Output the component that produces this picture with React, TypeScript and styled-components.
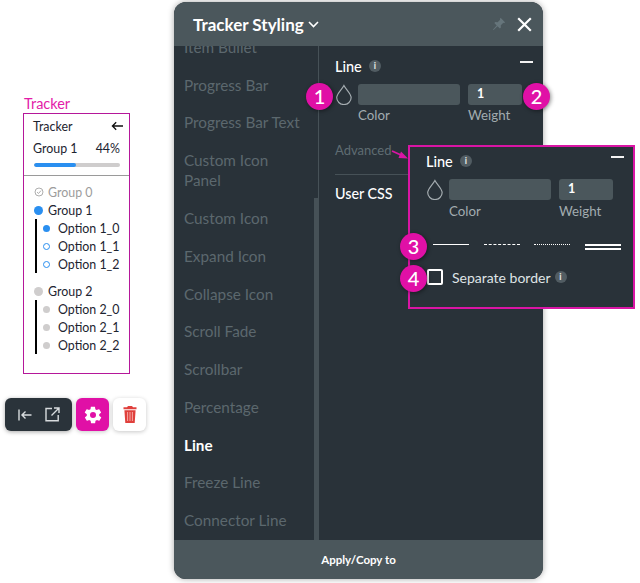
import React from "react";
import styled, { createGlobalStyle } from "styled-components";

const Global = createGlobalStyle`
  html, body { margin: 0; padding: 0; background: #fff; }
  body { font-family: Lato, "Noto Sans", sans-serif; width: 640px; height: 583px; overflow: hidden; }
  * { box-sizing: border-box; }
`;

const Page = styled.div`
  position: relative;
  width: 640px;
  height: 583px;
  display: flex;
  overflow: hidden;
`;

const LeftColumn = styled.div`
  width: 174px;
  flex: none;
  padding: 96px 0 0 4px;
  display: flex;
  flex-direction: column;
`;

const TrackerLabel = styled.div`
  margin-left: 20px;
  font-size: 14.5px;
  line-height: 15px;
  color: #e31ba8;
`;

const TrackerCard = styled.div`
  margin: 2px 0 0 19px;
  width: 107px;
  height: 261px;
  border: 1px solid #b5179a;
  color: #1d2430;
  font-size: 12.4px;
  background: #fff;
`;

const TrackerHead = styled.div`
  height: 62px;
  padding: 2px 5px 0 9px;
  border-bottom: 1px solid #9a9a9a;
`;

const HeadRow = styled.div`
  display: flex;
  justify-content: space-between;
  align-items: center;
  height: 20px;
  margin-bottom: 2px;
`;

const HeadPercent = styled.span`
  margin-right: 4px;
`;

const ProgressTrack = styled.div`
  margin: 5px 4px 0 1px;
  height: 4px;
  border-radius: 2px;
  background: #cfcdcd;
  overflow: hidden;
`;

const ProgressFill = styled.div`
  height: 100%;
  background: #2a8ff0;
  border-radius: 2px;
`;

const TrackerBody = styled.div`
  padding: 7px 0 0 10px;
`;

const GroupRow = styled.div<{ $muted?: boolean; $gap?: number }>`
  display: flex;
  align-items: center;
  height: 18px;
  gap: ${(p) => p.$gap ?? 5}px;
  color: ${(p) => (p.$muted ? "#9c9c9c" : "#1d2430")};
`;

const Dot = styled.span<{ $size: number; $color: string; $hollow?: boolean }>`
  flex: none;
  width: ${(p) => p.$size}px;
  height: ${(p) => p.$size}px;
  border-radius: 50%;
  background: ${(p) => (p.$hollow ? "#fff" : p.$color)};
  border: ${(p) => (p.$hollow ? `1.3px solid ${p.$color}` : "none")};
`;

const OptionList = styled.div`
  margin: 0 0 9px 1px;
  padding-left: 6px;
  border-left: 2px solid #000;
`;

const OptionRow = styled.div`
  display: flex;
  align-items: center;
  height: 18px;
  gap: 8px;
`;

const Toolbar = styled.div`
  margin: 24px 0 0 1px;
  display: flex;
  align-items: center;
  gap: 4px;
`;

const DarkTools = styled.div`
  width: 67px;
  height: 33px;
  border-radius: 6px;
  background: #2a333a;
  box-shadow: 0 1px 4px rgba(0, 0, 0, 0.35);
  display: flex;
  align-items: center;
  justify-content: center;
  gap: 13px;
`;

const SquareButton = styled.div<{ $bg: string }>`
  width: 33px;
  height: 33px;
  border-radius: 6px;
  background: ${(p) => p.$bg};
  box-shadow: 0 1px 4px rgba(0, 0, 0, 0.22);
  display: flex;
  align-items: center;
  justify-content: center;
`;

const Panel = styled.div`
  flex: none;
  width: 369px;
  height: 577px;
  margin-top: 2px;
  border-radius: 12px;
  overflow: hidden;
  background: #293239;
  box-shadow: 0 0 6px rgba(0, 0, 0, 0.35);
  display: flex;
  flex-direction: column;
`;

const PanelHeader = styled.div`
  height: 44px;
  flex: none;
  background: #4b575c;
  display: flex;
  align-items: center;
  padding: 0 11px 0 19px;
  color: #fff;
`;

const PanelTitle = styled.div`
  font-size: 17px;
  font-weight: 700;
  margin-right: 4px;
`;

const HeaderSpacer = styled.div`
  flex: 1;
`;

const PanelMain = styled.div`
  flex: 1;
  min-height: 0;
  display: flex;
`;

const Sidebar = styled.div`
  position: relative;
  width: 145px;
  flex: none;
  overflow: hidden;
  border-right: 1px solid #465157;
`;

const SideList = styled.div`
  margin-top: -18px;
  padding-left: 10px;
  display: flex;
  flex-direction: column;
`;

const SideItem = styled.div<{ $active?: boolean; $double?: boolean }>`
  height: ${(p) => (p.$double ? 58 : 37.75)}px;
  display: flex;
  align-items: ${(p) => (p.$double ? "flex-start" : "center")};
  padding-top: ${(p) => (p.$double ? 9 : 0)}px;
  font-size: 15.3px;
  line-height: 20px;
  color: ${(p) => (p.$active ? "#fff" : "#5c686e")};
  font-weight: ${(p) => (p.$active ? 700 : 400)};
`;

const ScrollThumb = styled.div`
  position: absolute;
  right: 0;
  bottom: 0;
  width: 4px;
  height: 342px;
  background: #465157;
`;

const Content = styled.div`
  flex: 1;
  padding: 10px 10px 0 16px;
  position: relative;
`;

const SectionHead = styled.div`
  display: flex;
  align-items: center;
  height: 20px;
  color: #fff;
  font-size: 14.5px;
  font-weight: 500;
  gap: 7px;
`;

const Minus = styled.span`
  margin: 0 0 8px auto;
  width: 13px;
  height: 2px;
  background: #f2f2f2;
`;

const InfoBadge = styled.span`
  width: 12px;
  height: 12px;
  border-radius: 50%;
  background: #515c62;
  color: #e8e8e8;
  font-size: 9px;
  font-weight: 700;
  line-height: 12px;
  text-align: center;
  flex: none;
`;

const FieldRow = styled.div`
  display: flex;
  gap: 8px;
  margin-top: 8px;
`;

const DropSlot = styled.div`
  width: 15px;
  flex: none;
`;

const Field = styled.div<{ $w: number }>`
  width: ${(p) => p.$w}px;
  flex: none;
`;

const InputBox = styled.div`
  height: 21px;
  border-radius: 3px;
  background: #4b575c;
  color: #fff;
  font-size: 12.5px;
  font-weight: 700;
  line-height: 20px;
  padding-left: 9px;
`;

const FieldLabel = styled.div<{ $top: number }>`
  margin-top: ${(p) => p.$top}px;
  font-size: 13.3px;
  line-height: 17px;
  color: #a2acb0;
`;

const AdvancedLink = styled.div`
  margin-top: 16px;
  height: 20px;
  font-size: 13px;
  line-height: 20px;
  color: #5f6c72;
`;

const Divider = styled.div`
  margin-top: 14px;
  height: 1px;
  background: #465157;
`;

const UserCss = styled.div`
  margin-top: 9px;
  font-size: 14.3px;
  font-weight: 500;
  line-height: 20px;
  color: #fff;
`;

const PanelFooter = styled.div`
  height: 39px;
  flex: none;
  padding-bottom: 1px;
  background: #4b575c;
  color: #fff;
  font-size: 11.5px;
  font-weight: 700;
  display: flex;
  align-items: center;
  justify-content: center;
`;

const Callout = styled.div`
  position: absolute;
  left: 408px;
  top: 145px;
  width: 227px;
  height: 164px;
  border: 2px solid #d915a5;
  background: #293239;
  padding: 4px 9px 0 16px;
`;

const LineStyles = styled.div`
  margin: 24px 0 0 7px;
  height: 6px;
  display: flex;
  align-items: flex-start;
  gap: 14.5px;
`;

const LineSample = styled.span<{ $kind: string }>`
  width: 36px;
  flex: none;
  height: ${(p) => (p.$kind === "double" ? 6 : 0)}px;
  border-top: ${(p) => (p.$kind === "double" ? "2px solid #fff" : `1px ${p.$kind} #fff`)};
  border-bottom: ${(p) => (p.$kind === "double" ? "2px solid #fff" : "none")};
`;

const CheckRow = styled.div`
  margin-top: 18px;
  display: flex;
  align-items: center;
  height: 18px;
  color: #dfe4e6;
  font-size: 14px;
  gap: 4px;
`;

const CheckBox = styled.span`
  width: 16px;
  height: 16px;
  border: 2px solid #fff;
  border-radius: 2px;
  margin: 0 5px 0 1px;
  flex: none;
`;

const Marker = styled.div<{ $x: number; $y: number }>`
  position: absolute;
  left: ${(p) => p.$x}px;
  top: ${(p) => p.$y}px;
  width: 27px;
  height: 27px;
  border-radius: 50%;
  background: #e010a6;
  color: #fff;
  font-size: 20px;
  font-weight: 500;
  line-height: 27px;
  text-align: center;
  box-shadow: 1px 1px 4px rgba(0, 0, 0, 0.45);
`;

const ArrowOverlay = styled.svg`
  position: absolute;
  left: 390px;
  top: 148px;
`;

const Drop = ({ size = 18 }: { size?: number }) => (
  <svg width={size * 0.85} height={size} viewBox="0 0 15 18" fill="none" stroke="#a5adb1" strokeWidth="1">
    <path d="M7.5 1.2C5.5 5 1.3 8.4 1.3 11.6a6.2 6 0 0 0 12.4 0C13.7 8.4 9.5 5 7.5 1.2Z" />
  </svg>
);

const Info = () => <InfoBadge>i</InfoBadge>;

const LineFields = ({ labelTop }: { labelTop: number }) => (
  <>
    <DropSlot>
      <Drop size={21} />
    </DropSlot>
    <Field $w={102}>
      <InputBox />
      <FieldLabel $top={labelTop}>Color</FieldLabel>
    </Field>
    <Field $w={54}>
      <InputBox>1</InputBox>
      <FieldLabel $top={labelTop}>Weight</FieldLabel>
    </Field>
  </>
);

const sideItems = ["Item Bullet", "Progress Bar", "Progress Bar Text"];
const sideRest = [
  "Custom Icon",
  "Expand Icon",
  "Collapse Icon",
  "Scroll Fade",
  "Scrollbar",
  "Percentage",
  "Line",
  "Freeze Line",
  "Connector Line",
];

export default function App() {
  return (
    <Page>
      <Global />
      <LeftColumn>
        <TrackerLabel>Tracker</TrackerLabel>
        <TrackerCard>
          <TrackerHead>
            <HeadRow>
              <span>Tracker</span>
              <svg width="13" height="10" viewBox="0 0 13 10" fill="none" stroke="#111" strokeWidth="1.3">
                <path d="M12 5H1.5M5.2 1.2 1.4 5l3.8 3.8" />
              </svg>
            </HeadRow>
            <HeadRow>
              <span>Group 1</span>
              <HeadPercent>44%</HeadPercent>
            </HeadRow>
            <ProgressTrack>
              <ProgressFill style={{ width: "49%" }} />
            </ProgressTrack>
          </TrackerHead>
          <TrackerBody>
            <GroupRow $muted $gap={4}>
              <svg width="10" height="10" viewBox="0 0 10 10" fill="none" stroke="#a5a5a5" strokeWidth="0.9">
                <circle cx="5" cy="5" r="4" />
                <path d="M3 5.1 4.5 6.5 7 3.6" />
              </svg>
              <span>Group 0</span>
            </GroupRow>
            <GroupRow>
              <Dot $size={9} $color="#2a8ff0" />
              <span>Group 1</span>
            </GroupRow>
            <OptionList>
              <OptionRow>
                <Dot $size={7} $color="#2a8ff0" />
                <span>Option 1_0</span>
              </OptionRow>
              <OptionRow>
                <Dot $size={7} $color="#2a8ff0" $hollow />
                <span>Option 1_1</span>
              </OptionRow>
              <OptionRow>
                <Dot $size={7} $color="#2a8ff0" $hollow />
                <span>Option 1_2</span>
              </OptionRow>
            </OptionList>
            <GroupRow>
              <Dot $size={9} $color="#cfcdcd" />
              <span>Group 2</span>
            </GroupRow>
            <OptionList>
              <OptionRow>
                <Dot $size={7} $color="#cfcdcd" />
                <span>Option 2_0</span>
              </OptionRow>
              <OptionRow>
                <Dot $size={7} $color="#cfcdcd" />
                <span>Option 2_1</span>
              </OptionRow>
              <OptionRow>
                <Dot $size={7} $color="#cfcdcd" />
                <span>Option 2_2</span>
              </OptionRow>
            </OptionList>
          </TrackerBody>
        </TrackerCard>
        <Toolbar>
          <DarkTools>
            <svg width="14" height="12" viewBox="0 0 14 12" fill="none" stroke="#d8dcde" strokeWidth="1.4">
              <path d="M1 0.5v11M13.5 6H4M7.5 2.6 4 6l3.5 3.4" />
            </svg>
            <svg width="15" height="15" viewBox="0 0 15 15" fill="none" stroke="#d8dcde" strokeWidth="1.4">
              <path d="M7 1.5H1v12.2h12.2V8M9 1h5v5M14 1 6.5 8.5" />
            </svg>
          </DarkTools>
          <SquareButton $bg="#e010a6">
            <svg width="20" height="20" viewBox="0 0 24 24" fill="#fff">
              <path
                fillRule="evenodd"
                d="M19.4 13c.1-.3.1-.7.1-1s0-.7-.1-1l2.1-1.6c.2-.2.2-.4.1-.6l-2-3.5c-.1-.2-.4-.3-.6-.2l-2.5 1c-.5-.4-1.1-.7-1.7-1l-.4-2.6c0-.3-.2-.5-.5-.5h-4c-.3 0-.5.2-.5.4l-.4 2.7c-.6.2-1.2.6-1.7 1l-2.5-1c-.2-.1-.5 0-.6.2l-2 3.5c-.1.2-.1.5.1.6L4.6 11c0 .3-.1.7-.1 1s0 .7.1 1l-2.1 1.6c-.2.2-.2.4-.1.6l2 3.5c.1.2.4.3.6.2l2.5-1c.5.4 1.1.7 1.7 1l.4 2.6c0 .3.2.5.5.5h4c.3 0 .5-.2.5-.4l.4-2.7c.6-.2 1.2-.6 1.7-1l2.5 1c.2.1.5 0 .6-.2l2-3.5c.1-.2.1-.5-.1-.6L19.4 13ZM12 15.6a3.6 3.6 0 1 1 0-7.2 3.6 3.6 0 0 1 0 7.2Z"
              />
            </svg>
          </SquareButton>
          <SquareButton $bg="#fff">
            <svg width="14" height="17" viewBox="0 0 14 17" fill="#e0403c">
              <path d="M5 0h4l1 1.3h3.5v1.9H.5V1.3H4L5 0ZM1.4 4.2h11.2L11.7 17H2.3L1.4 4.2Z" />
              <path d="M4.6 6v9M7 6v9M9.4 6v9" stroke="#f7b3b0" strokeWidth="0.9" />
            </svg>
          </SquareButton>
        </Toolbar>
      </LeftColumn>

      <Panel>
        <PanelHeader>
          <PanelTitle>Tracker Styling</PanelTitle>
          <svg width="11" height="7" viewBox="0 0 11 7" fill="none" stroke="#fff" strokeWidth="1.6">
            <path d="M1 1l4.5 4.5L10 1" />
          </svg>
          <HeaderSpacer />
          <svg width="14" height="14" viewBox="0 0 14 14" fill="#66757b" style={{ marginRight: 11 }}>
            <path d="M8.6.8 13.2 5.4 11.9 6l-.6-.2-2.5 2.5.1 2.3-1 1-2.4-2.4L1.6 13l-.6-.6 3.7-3.9L2.3 6.1l1-1 2.3.1L8.1 2.7 7.9 2.1 8.6.8Z" />
          </svg>
          <svg width="15" height="15" viewBox="0 0 15 15" fill="none" stroke="#fff" strokeWidth="2.2">
            <path d="M1.2 1.2 13.8 13.800M13.800 1.200 1.200 13.800" />
          </svg>
        </PanelHeader>
        <PanelMain>
          <Sidebar>
            <SideList>
              {sideItems.map((s) => (
                <SideItem key={s}>{s}</SideItem>
              ))}
              <SideItem $double>
                Custom Icon
                <br />
                Panel
              </SideItem>
              {sideRest.map((s) => (
                <SideItem key={s} $active={s === "Line"}>
                  {s}
                </SideItem>
              ))}
            </SideList>
            <ScrollThumb />
          </Sidebar>
          <Content>
            <SectionHead>
              Line <Info />
              <Minus />
            </SectionHead>
            <FieldRow>
              <LineFields labelTop={2} />
            </FieldRow>
            <AdvancedLink>Advanced</AdvancedLink>
            <Divider />
            <UserCss>User CSS</UserCss>
          </Content>
        </PanelMain>
        <PanelFooter>Apply/Copy to</PanelFooter>
      </Panel>

      <ArrowOverlay width="20" height="14" viewBox="0 0 20 14" fill="none">
        <path d="M2 3 11 7" stroke="#d915a5" strokeWidth="1.8" />
        <path d="M18 10.5 8.500 10 11 3.500Z" fill="#d915a5" />
      </ArrowOverlay>

      <Callout>
        <SectionHead>
          Line <Info />
          <Minus />
        </SectionHead>
        <FieldRow>
          <LineFields labelTop={3} />
        </FieldRow>
        <LineStyles>
          <LineSample $kind="solid" />
          <LineSample $kind="dashed" />
          <LineSample $kind="dotted" />
          <LineSample $kind="double" />
        </LineStyles>
        <CheckRow>
          <CheckBox />
          <span>Separate border</span>
          <Info />
        </CheckRow>
      </Callout>

      <Marker $x={306} $y={83}>1</Marker>
      <Marker $x={523} $y={83}>2</Marker>
      <Marker $x={400} $y={233}>3</Marker>
      <Marker $x={400} $y={265}>4</Marker>
    </Page>
  );
}
